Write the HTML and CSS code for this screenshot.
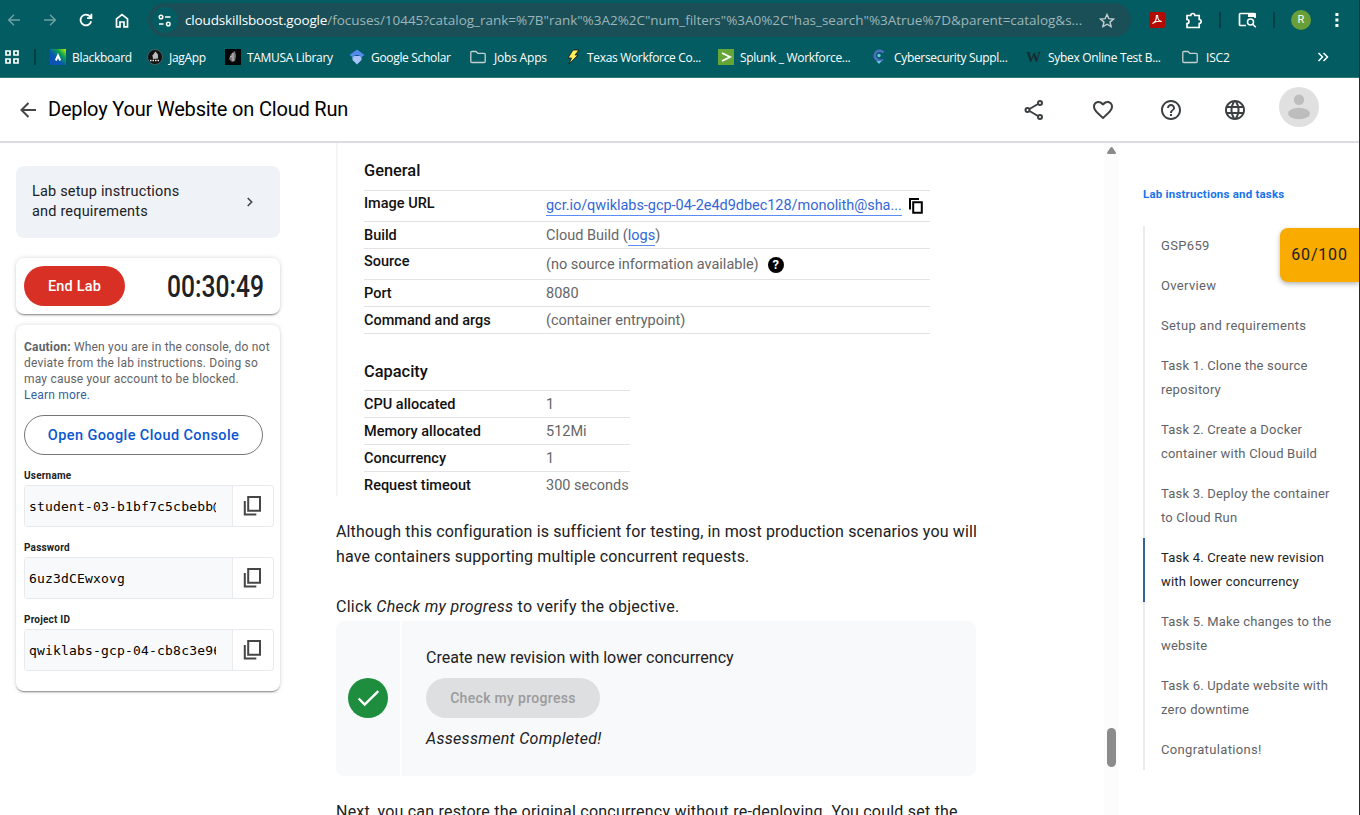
FILE: index.html
```html
<!DOCTYPE html>
<html lang="en">
<head>
<meta charset="utf-8">
<title>Deploy Your Website on Cloud Run</title>
<link rel="stylesheet" href="styles.css">
</head>
<body>
<svg class="defs" width="0" height="0">
  <symbol id="copy" viewBox="0 0 20 22"><path d="M5.200 2h11.800v13.800H5.200zM1.800 6v13.500h11.500" fill="none" stroke="#444746" stroke-width="2"/></symbol>
  <symbol id="folder" viewBox="0 0 16 14"><path d="M.8 2.500v9q0 1 1 1h12.400q1 0 1-1V4.300q0-1-1-1H7.800L6 1.500H1.800q-1 0-1 1z" fill="none" stroke="#c7cfd1" stroke-width="1.300"/></symbol>
</svg>
<div class="window">
  <div class="chrome">
    <div class="toolbar">
      <svg class="dim" width="14" height="14" viewBox="0 0 14 14"><path d="M13 7H2M7 1.700 1.700 7 7 12.300"/></svg>
      <svg class="dim" width="14" height="14" viewBox="0 0 14 14"><path d="M1 7h11M7 1.700 12.300 7 7 12.300"/></svg>
      <svg width="14" height="14" viewBox="0 0 14 14"><path d="M12.200 8.200A5.400 5.400 0 1 1 11 3.400l1 1M12.400.8v4.400H8" stroke-width="1.800"/></svg>
      <svg width="14" height="15" viewBox="0 0 14 15"><path d="M1.500 5.800 7 1.500l5.500 4.300v8H9V9H5v4.800H1.500z" stroke-width="1.700"/></svg>
      <div class="omnibox">
        <span class="tune"><svg width="14" height="13" viewBox="0 0 14 13"><circle cx="3" cy="3" r="1.800"/><path d="M7 3h5.500M1 10h4.500"/><circle cx="10.300" cy="10" r="1.800"/></svg></span>
        <span class="url"><b>cloudskillsboost.google</b><span class="path">/focuses/10445?catalog_rank=%7B"rank"%3A2%2C"num_filters"%3A0%2C"has_search"%3Atrue%7D&amp;parent=catalog&amp;s...</span></span>
        <svg class="star" width="16" height="15" viewBox="0 0 16 15"><path d="m8 1.500 1.900 4.200 4.600.4-3.500 3 1.100 4.500L8 11.200l-4.100 2.400L5 9.100l-3.500-3 4.600-.4z"/></svg>
      </div>
      <span class="pdf"><svg width="12" height="12" viewBox="0 0 12 12"><path d="M1.500 9.500C4 8.500 5.500 5 5.400 1.500h1.200C6.600 5 8 7.200 10.800 7.500 7.500 6.800 4 7.600 1.500 9.500z"/></svg></span>
      <svg width="17" height="17" viewBox="0 0 17 17"><path d="M2 3.500h3.800a2 2 0 0 1 4 0h4.400v4a2 2 0 0 1 0 4v4H2v-4a2 2 0 0 0 0-4z" stroke-width="1.700"/></svg>
      <i class="sep"></i>
      <svg width="19" height="16" viewBox="0 0 19 16"><path d="M8 13.500H2.500q-1 0-1-1v-10q0-1 1-1H16q1 0 1 1V6" stroke-width="1.700"/><path d="M10 1h7.800v4H10z" fill="#fff" stroke="none"/><circle cx="12.500" cy="10" r="3"/><path d="m14.500 12 3.300 3.300"/></svg>
      <i class="sep"></i>
      <span class="profile">R</span>
      <svg width="4" height="16" viewBox="0 0 4 16"><path d="M.4 1h3v3h-3zM.4 6.500h3v3h-3zM.4 12h3v3h-3z" fill="#fff" stroke="none"/></svg>
    </div>
    <div class="bookmarks">
      <svg width="14" height="14" viewBox="0 0 14 14"><path d="M1 1h4v4H1zM9 1h4v4H9zM1 9h4v4H1zM9 9h4v4H9z" fill="none" stroke="#fff" stroke-width="1.700"/></svg>
      <i class="sep"></i>
      <div class="bm"><svg width="16" height="16" viewBox="0 0 16 16"><defs><linearGradient id="bb" x1="0" y1="1" x2="1" y2="0"><stop offset=".4" stop-color="#0b54b5"/><stop offset=".7" stop-color="#08a34e"/><stop offset="1" stop-color="#c4f000"/></linearGradient></defs><path d="M0 0h16v16H0z" fill="url(#bb)"/><path d="M5.800 11.500 8 6.500l2.200 5" fill="none" stroke="#fff" stroke-width="2"/></svg><span>Blackboard</span></div>
      <div class="bm"><svg width="16" height="16" viewBox="0 0 16 16"><circle cx="8" cy="8" r="7.500" fill="#111" stroke="#4c6062"/><path d="m5.500 6.500 3-4 2.500 3v4l-5 .5z" fill="#bbb"/><path d="M3 11.500h10" stroke="#eee" stroke-width="1.500" stroke-dasharray="1.500 1"/></svg><span>JagApp</span></div>
      <div class="bm"><svg width="16" height="16" viewBox="0 0 16 16"><path d="M0 0h16v16H0z" fill="#060606"/><path d="m4 10 2-5 4-3 1 5-1 5-3 1z" fill="#777"/><path d="M8 4v8M5 8l2-1" stroke="#ccc" fill="none"/></svg><span>TAMUSA Library</span></div>
      <div class="bm"><svg width="16" height="16" viewBox="0 0 16 16"><path d="M3.500 7h9v4L8 15.500 3.500 11z" fill="#a7c4fa"/><path d="m.5 6 7.500-5.500L15.500 6 12 8.500a4.500 4.500 0 0 0-8 0z" fill="#5588ec"/></svg><span>Google Scholar</span></div>
      <div class="bm dir"><svg width="16" height="14"><use href="#folder"/></svg><span>Jobs Apps</span></div>
      <div class="bm"><svg width="14" height="16" viewBox="0 0 14 16"><path d="M7 1h6L9 6h3l-9 9 2.500-6H2z" fill="#ffef5a" stroke="#111" stroke-width=".8"/></svg><span>Texas Workforce Co...</span></div>
      <div class="bm"><svg width="16" height="16" viewBox="0 0 16 16"><path d="M0 0h16v16H0z" fill="#65a637"/><path d="m4 4 8 4-8 4" fill="none" stroke="#fff" stroke-width="1.900"/></svg><span>Splunk _ Workforce...</span></div>
      <div class="bm cyber"><svg width="16" height="16" viewBox="0 0 16 16"><path d="M12.500 3.500A5 5 0 1 0 12 10.500M5 9l3 3.500" fill="none" stroke="#4e6fc4" stroke-width="2.300"/><path d="M5.500 12h5L8 15z" fill="#67c7e8"/><circle cx="8" cy="6.500" r="1.700" fill="#67c7e8"/></svg><span>Cybersecurity Suppl...</span></div>
      <div class="bm"><strong class="wiley">W</strong><span>Sybex Online Test B...</span></div>
      <div class="bm dir"><svg width="16" height="14"><use href="#folder"/></svg><span>ISC2</span></div>
      <svg width="12" height="10" viewBox="0 0 12 10"><path d="m1.500 1 4 4-4 4M6.500 1l4 4-4 4" fill="none" stroke="#fff" stroke-width="1.500"/></svg>
    </div>
  </div>

  <header class="header">
    <svg width="16" height="16" viewBox="0 0 16 16"><path d="M16 8H2M8.500 1 1.500 8l7 7" fill="none" stroke="#444746" stroke-width="2"/></svg>
    <h1>Deploy Your Website on Cloud Run</h1>
    <div class="actions">
      <svg width="20" height="22" viewBox="0 0 20 22"><g fill="none" stroke="#3c4043" stroke-width="2"><circle cx="3.500" cy="11" r="2"/><circle cx="16" cy="4" r="2"/><circle cx="16" cy="18" r="2"/><path d="m5.500 10 8.500-5M5.500 12l8.500 5"/></g></svg>
      <svg width="24" height="24" viewBox="0 0 24 24"><path fill="#3c4043" d="M16.500 3c-1.740 0-3.410.81-4.500 2.090C10.910 3.810 9.240 3 7.500 3 4.420 3 2 5.420 2 8.500c0 3.780 3.400 6.860 8.550 11.540L12 21.350l1.450-1.320C18.600 15.360 22 12.280 22 8.500 22 5.420 19.580 3 16.500 3zm-4.400 15.550l-.1.1-.1-.1C7.140 14.240 4 11.390 4 8.500 4 6.500 5.500 5 7.500 5c1.540 0 3.040.99 3.570 2.360h1.870C13.460 5.990 14.960 5 16.500 5c2 0 3.500 1.500 3.500 3.500 0 2.890-3.140 5.740-7.900 10.050z"/></svg>
      <svg width="24" height="24" viewBox="0 0 24 24"><path fill="#3c4043" d="M11 18h2v-2h-2v2zm1-16C6.480 2 2 6.480 2 12s4.480 10 10 10 10-4.480 10-10S17.520 2 12 2zm0 18c-4.410 0-8-3.590-8-8s3.590-8 8-8 8 3.590 8 8-3.590 8-8 8zm0-14c-2.210 0-4 1.790-4 4h2c0-1.100.9-2 2-2s2 .9 2 2c0 2-3 1.750-3 5h2c0-2.250 3-2.500 3-5 0-2.210-1.790-4-4-4z"/></svg>
      <svg width="24" height="24" viewBox="0 0 24 24"><path fill="#3c4043" d="M11.990 2C6.470 2 2 6.480 2 12s4.470 10 9.990 10C17.520 22 22 17.520 22 12S17.520 2 11.990 2zm6.930 6h-2.950c-.32-1.250-.78-2.450-1.380-3.560 1.840.63 3.370 1.910 4.330 3.560zM12 4.040c.83 1.200 1.480 2.530 1.910 3.960h-3.820c.43-1.430 1.080-2.760 1.910-3.960zM4.260 14C4.100 13.360 4 12.690 4 12s.1-1.360.26-2h3.380c-.08.66-.14 1.320-.14 2 0 .68.06 1.340.14 2H4.260zm.82 2h2.950c.32 1.250.78 2.450 1.380 3.560-1.840-.63-3.370-1.900-4.330-3.560zm2.950-8H5.080c.96-1.660 2.490-2.930 4.330-3.560C8.810 5.550 8.350 6.750 8.030 8zM12 19.960c-.83-1.200-1.480-2.530-1.910-3.960h3.820c-.43 1.430-1.080 2.760-1.910 3.960zM14.340 14H9.660c-.09-.66-.16-1.320-.16-2 0-.68.07-1.350.16-2h4.680c.09.65.16 1.320.16 2 0 .68-.07 1.340-.16 2zm.25 5.560c.6-1.110 1.060-2.310 1.380-3.560h2.950c-.96 1.650-2.490 2.930-4.330 3.560zM16.360 14c.08-.66.14-1.320.14-2 0-.68-.06-1.340-.14-2h3.380c.16.640.26 1.310.26 2s-.1 1.360-.26 2h-3.380z"/></svg>
      <svg class="avatar" width="40" height="40" viewBox="0 0 40 40"><circle cx="20" cy="20" r="20" fill="#e0e0e0"/><circle cx="20" cy="12.700" r="5.200" fill="#bdbdbd"/><ellipse cx="20" cy="26.500" rx="11" ry="5.700" fill="#bdbdbd"/></svg>
    </div>
  </header>

  <div class="page">
    <aside class="left">
      <div class="setup"><span>Lab setup instructions<br>and requirements</span><svg width="8" height="10" viewBox="0 0 8 10"><path d="m1.700 1 4 4-4 4" fill="none" stroke="#444746" stroke-width="1.600"/></svg></div>
      <div class="timer"><button class="end">End Lab</button><span class="clock">00:30:49</span></div>
      <div class="panel">
        <p class="caution"><b>Caution:</b> When you are in the console, do not<br>deviate from the lab instructions. Doing so<br>may cause your account to be blocked.<br><a>Learn more.</a></p>
        <button class="console">Open Google Cloud Console</button>
        <label>Username</label>
        <div class="field"><div><span>student-03-b1bf7c5cbebb@</span></div><svg width="20" height="22"><use href="#copy"/></svg></div>
        <label>Password</label>
        <div class="field"><div><span>6uz3dCEwxovg</span></div><svg width="20" height="22"><use href="#copy"/></svg></div>
        <label>Project ID</label>
        <div class="field"><div><span>qwiklabs-gcp-04-cb8c3e96</span></div><svg width="20" height="22"><use href="#copy"/></svg></div>
      </div>
    </aside>

    <main class="main">
      <div class="details">
        <h2>General</h2>
        <dl class="general">
          <dt class="tall">Image URL</dt><dd class="tall"><a class="img-url">gcr.io/qwiklabs-gcp-04-2e4d9dbec128/monolith@sha...</a><svg class="copy2" width="14" height="16" viewBox="0 0 14 16"><path d="M1 11.500V1h9M4.200 4.200h8.600v10.600H4.200z" fill="none" stroke="#000" stroke-width="2"/></svg></dd>
          <dt>Build</dt><dd>Cloud Build (<a>logs</a>)</dd>
          <dt class="tall">Source</dt><dd class="tall">(no source information available)<span class="help">?</span></dd>
          <dt>Port</dt><dd>8080</dd>
          <dt>Command and args</dt><dd>(container entrypoint)</dd>
        </dl>
        <h2 class="cap">Capacity</h2>
        <dl class="capacity">
          <dt>CPU allocated</dt><dd>1</dd>
          <dt>Memory allocated</dt><dd>512Mi</dd>
          <dt>Concurrency</dt><dd>1</dd>
          <dt>Request timeout</dt><dd>300 seconds</dd>
        </dl>
      </div>
      <p class="text">Although this configuration is sufficient for testing, in most production scenarios you will<br>have containers supporting multiple concurrent requests.</p>
      <p class="text click">Click <em>Check my progress</em> to verify the objective.</p>
      <section class="check">
        <div class="status"><svg width="40" height="40" viewBox="0 0 40 40"><circle cx="20" cy="20" r="20" fill="#1e8e3e"/><path d="m10.700 20.500 6 6L30.300 13.200" fill="none" stroke="#fff" stroke-width="2.400"/></svg></div>
        <div class="step"><p>Create new revision with lower concurrency</p><button>Check my progress</button><p class="done">Assessment Completed!</p></div>
      </section>
      <p class="text next">Next, you can restore the original concurrency without re-deploying. You could set the</p>
    </main>

    <div class="scroll"><svg width="9" height="7" viewBox="0 0 9 7"><path d="M4.500 0q.7 0 1.200.8L9 5.800Q9 7 8 7H1Q0 7 0 5.800L3.300.8Q3.800 0 4.500 0z" fill="#8b8b8b"/></svg><i></i></div>

    <nav class="right">
      <h3>Lab instructions and tasks</h3>
      <ul>
        <li class="w">GSP659</li>
        <li class="w">Overview</li>
        <li class="w">Setup and requirements</li>
        <li>Task 1. Clone the source<br>repository</li>
        <li>Task 2. Create a Docker<br>container with Cloud Build</li>
        <li>Task 3. Deploy the container<br>to Cloud Run</li>
        <li class="on">Task 4. Create new revision<br>with lower concurrency</li>
        <li>Task 5. Make changes to the<br>website</li>
        <li>Task 6. Update website with<br>zero downtime</li>
        <li class="w">Congratulations!</li>
      </ul>
      <div class="score">60/100</div>
    </nav>
  </div>
</div>
</body>
</html>
```
FILE: styles.css
```css
* { box-sizing: border-box; }
body { margin: 0; background: #fff; font-family: Roboto, sans-serif; color: #202124; }
h1, h2, h3, p, ul, dl, dd { margin: 0; padding: 0; }
button { font-family: inherit; border: 0; padding: 0; }
svg { display: block; flex: none; }
.defs { position: absolute; }
.window { width: 1360px; height: 815px; overflow: hidden; border-right: 1px solid #2b2637; display: flex; flex-direction: column; }

.chrome { height: 78px; flex: none; background: #035c62; border-bottom: 1px solid #2f7a7d; font-family: "Open Sans", sans-serif; color: #fff; }
.toolbar { height: 40px; display: grid; grid-template-columns: 28px 44px 28px 44px 995px 36px 36px 18px 36px 18px 36px 36px; align-items: center; justify-items: center; }
.toolbar svg { fill: none; stroke: #fff; stroke-width: 1.5; }
.toolbar .dim { stroke: #6d9fa2; }
.omnibox { justify-self: start; margin: 0 0 0 4px; width: 983px; height: 34px; border-radius: 17px; background: #1a4f57; display: flex; align-items: center; padding: 0 16px 0 4px; }
.tune { width: 26px; height: 26px; border-radius: 13px; background: #035c62; display: flex; align-items: center; justify-content: center; }
.url { margin-left: 7px; flex: 1; font-size: 13.5px; white-space: nowrap; color: #9db5b9; }
.url b { font-weight: 400; color: #fff; letter-spacing: -.16px; }
.path { letter-spacing: -.02px; }
.omnibox .star { stroke: #c3cfd1; stroke-width: 1.4; }
.pdf { width: 16px; height: 16px; border-radius: 2px; background: #b30b00; display: grid; place-items: center; }
.pdf svg { stroke-width: 1.1; }
.sep { display: block; width: 2px; height: 16px; background: #043f47; }
.profile { width: 20px; height: 20px; border-radius: 10px; background: #689f38; font: 11px/20px Roboto, sans-serif; text-align: center; }
.bookmarks { height: 34px; padding-left: 5px; display: grid; grid-template-columns: 29px 16px 97px 78px 124px 121px 95px 153px 153px 155px 156px 135px 1fr; align-items: center; }
.bm { display: flex; align-items: center; gap: 6px; font-size: 12px; white-space: nowrap; letter-spacing: -.32px; }
.bm > svg { width: 16px; }
.dir { gap: 8px; letter-spacing: -.2px; }
.cyber { gap: 7px; }
.wiley { width: 16px; font: bold 15px "Liberation Serif", serif; color: #172c30; }

.header { height: 65px; flex: none; border-bottom: 2px solid #dadce0; display: flex; align-items: center; padding-left: 20px; }
.header h1 { margin: 0 0 2px 12px; flex: 1; font-size: 20px; font-weight: 400; color: #000; letter-spacing: -.18px; }
.actions { display: grid; grid-template-columns: 67px 68px 64px 56px 80px; align-items: center; width: 336px; padding-left: 1px; }
.actions .avatar { margin-top: -6px; }

.page { flex: 1; min-height: 0; display: flex; overflow: hidden; }
.left { width: 336px; flex: none; padding: 23px 56px 0 16px; }
.setup { height: 72px; border-radius: 8px; background: #eff3f8; padding: 0 26px 0 16px; display: flex; align-items: center; justify-content: space-between; font-size: 14.5px; line-height: 20px; letter-spacing: .18px; }
.timer { margin-top: 20px; height: 56px; padding: 8px; border-radius: 8px; box-shadow: 0 2px 2px -1px rgba(0,0,0,.45), 0 0 4px rgba(0,0,0,.16); display: flex; justify-content: space-between; align-items: center; }
.end { width: 101px; height: 40px; border-radius: 20px; background: #d93025; color: #fff; font-size: 14.5px; font-weight: 500; letter-spacing: .2px; }
.clock { width: 97px; margin-right: 8px; font-size: 32px; font-weight: 500; line-height: 40px; white-space: nowrap; transform: scaleX(.77); transform-origin: left; }
.panel { margin-top: 11px; height: 366px; padding: 14px 6px 0 8px; border-radius: 8px; box-shadow: 0 2px 2px -1px rgba(0,0,0,.45), 0 0 4px rgba(0,0,0,.16); }
.caution { font-size: 12px; line-height: 16px; letter-spacing: .2px; color: #5f6368; white-space: nowrap; }
.caution a { color: #33619e; }
.console { display: block; margin-top: 12px; width: 239px; height: 40px; border: 1px solid #747775; border-radius: 20px; background: #fff; color: #0b57d0; font-size: 14.5px; font-weight: 500; letter-spacing: .4px; }
.panel label { display: block; height: 30px; padding-top: 14px; font-size: 10px; line-height: 14px; font-weight: 700; letter-spacing: .2px; }
.field { height: 42px; width: 250px; border: 1px solid #e8eaed; border-radius: 3px; display: grid; grid-template-columns: 208px 1fr; align-items: center; font: 13px "DejaVu Sans Mono", monospace; letter-spacing: .18px; color: #000; }
.field div { height: 40px; padding: 0 16px 0 4px; border-right: 1px solid #e8eaed; background: #f8f9fb; line-height: 41px; white-space: nowrap; }
.field span { display: block; overflow: hidden; }
.field svg { justify-self: center; }

.main { width: 768px; flex: none; }
.details { height: 353px; border-left: 2px solid #f4f5f8; padding-left: 26px; }
.details h2 { height: 47px; padding-top: 18px; font-size: 16.4px; line-height: 20px; font-weight: 500; color: #111; }
.details .cap { height: 56px; padding-top: 28px; }
dl { display: grid; grid-template-columns: 182px 1fr; border-top: 1px solid #e3e3e3; font-size: 14.5px; }
.general { width: 566px; }
.capacity { width: 266px; }
dt, dd { height: 27px; border-bottom: 1px solid #e3e3e3; line-height: 28px; white-space: nowrap; }
dt { font-weight: 500; color: #111; }
dd { color: #666; }
dd.tall { height: 31px; padding-top: 1px; line-height: 32px; display: flex; align-items: center; }
dt.tall { height: 31px; line-height: 26px; }
.capacity > :nth-last-child(-n+2) { border-bottom: 0; }
dd a { color: #3367d6; line-height: 18px; display: inline-block; border-bottom: 1px solid #5b8df5; }
.img-url { letter-spacing: -.04px; }
.copy2 { margin-left: 7px; margin-top: -1px; }
.help { width: 16px; height: 16px; margin-left: 9px; border-radius: 8px; background: #000; color: #fff; font-size: 13px; line-height: 16px; font-weight: 700; text-align: center; }
.text { padding-top: 23px; font-size: 16px; line-height: 25px; white-space: nowrap; letter-spacing: .14px; }
.click { padding-top: 25px; letter-spacing: .27px; }
.next { letter-spacing: .22px; }
.check { margin-top: 2px; width: 640px; height: 155px; display: grid; grid-template-columns: 64px 1fr; gap: 2px; border-radius: 8px; overflow: hidden; }
.status { background: #f8f9fb; display: grid; justify-items: center; padding-top: 57px; }
.step { background: #f8f9fb; padding: 25px 0 0 24px; font-size: 16px; line-height: 24px; }
.step button { display: block; width: 174px; height: 40px; margin: 8px 0 9px; border-radius: 20px; background: #dedfe1; color: #9a9b9d; font-size: 14px; font-weight: 500; letter-spacing: .32px; }
.done { font-style: italic; letter-spacing: .31px; }

.scroll { width: 15px; flex: none; background: #fcfcfc; display: flex; flex-direction: column; align-items: center; padding-top: 4px; }
.scroll i { width: 9px; height: 39px; margin-top: 574px; border-radius: 4.5px; background: #8b8b8b; }
.right { position: relative; flex: 1; padding: 43px 0 0 24px; }
.right h3 { height: 40px; font-size: 11.5px; line-height: 17px; font-weight: 700; color: #1a73e8; letter-spacing: .2px; }
.right ul { list-style: none; border-left: 2px solid #e8eaf0; font-size: 13px; line-height: 24px; letter-spacing: .2px; color: #5f6368; }
.right li { padding: 8px 0 8px 16px; white-space: nowrap; }
.right .w { letter-spacing: .34px; }
.right .on { margin-left: -2px; padding-left: 16px; border-left: 2px solid #33619e; color: #202124; }
.score { position: absolute; top: 85px; right: 0; width: 79px; height: 54px; border-radius: 8px 0 0 8px; background: #f9ab00; box-shadow: 0 2px 5px rgba(0,0,0,.3); font-size: 16px; line-height: 54px; text-align: center; letter-spacing: .8px; }
```
